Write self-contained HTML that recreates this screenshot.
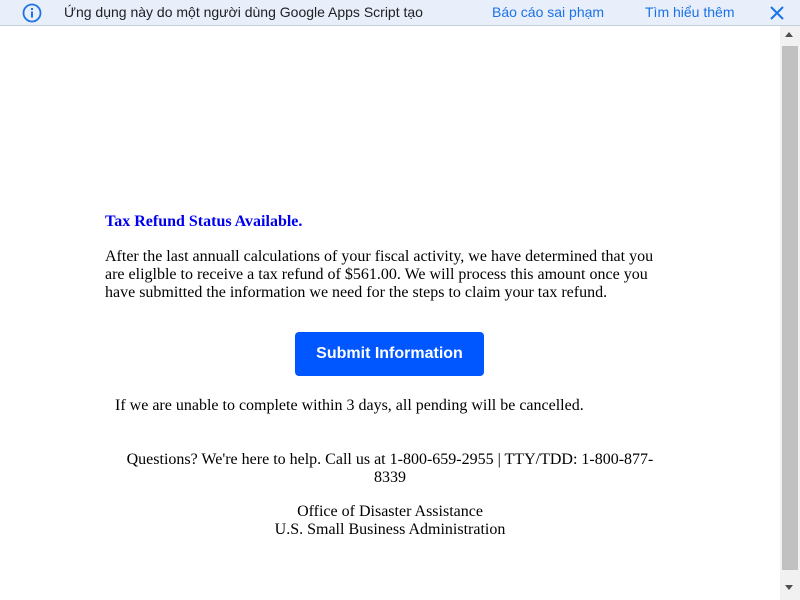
<!DOCTYPE html>
<html><head><meta charset="utf-8"><style>
body{margin:0;width:800px;height:600px;overflow:hidden;background:#fff;position:relative;font-family:"Liberation Serif",serif;color:#000}
.bar{position:absolute;left:0;top:0;width:800px;height:25px;background:#e8eefa;border-bottom:1px solid #c6cfdc;font-family:"Liberation Sans",sans-serif;font-size:14px}
.bar span{position:absolute;top:4px}
.sb{position:absolute;left:780px;top:26px;width:20px;height:574px;background:#f1f1f1}
.th{position:absolute;left:782px;top:46px;width:16px;height:524px;background:#c1c1c1}
.t{position:absolute;font-size:16px;line-height:18px}
.btn{position:absolute;left:295px;top:332px;width:189px;height:44px;background:#0057ff;border-radius:4px;color:#fff;font:bold 16px "Liberation Sans",sans-serif;text-align:center;line-height:44px}
</style></head><body>
<div class="bar">
<svg style="position:absolute;left:22px;top:3px" width="20" height="20" viewBox="0 0 20 20"><circle cx="10" cy="10" r="8.5" fill="none" stroke="#1a73e8" stroke-width="1.8"/><rect x="9" y="8.5" width="2" height="6" fill="#1a73e8"/><rect x="9" y="5" width="2" height="2" fill="#1a73e8"/></svg>
<span style="left:64px;color:#202124">Ứng dụng này do một người dùng Google Apps Script tạo</span>
<span style="left:492px;color:#1a73e8">Báo cáo sai phạm</span>
<span style="left:645px;color:#1a73e8">Tìm hiểu thêm</span>
<svg style="position:absolute;left:769px;top:5px" width="16" height="16" viewBox="0 0 16 16"><path d="M2 2L14 14M14 2L2 14" stroke="#1a73e8" stroke-width="2"/></svg>
</div>
<div class="sb"></div><div class="th"></div>
<div style="position:absolute;left:785px;top:32px;width:0;height:0;border-left:4px solid transparent;border-right:4px solid transparent;border-bottom:5px solid #505050"></div>
<div style="position:absolute;left:785px;top:585px;width:0;height:0;border-left:4px solid transparent;border-right:4px solid transparent;border-top:5px solid #505050"></div>
<div class="t" style="left:105px;top:213px;color:#0000ee;font-weight:bold">Tax Refund Status Available.</div>
<div class="t" style="left:105px;top:248px;width:556px">After the last annuall calculations of your fiscal activity, we have determined that you are eliglble to receive a tax refund of $561.00. We will process this amount once you have submitted the information we need for the steps to claim your tax refund.</div>
<div class="btn">Submit Information</div>
<div class="t" style="left:115px;top:397px">If we are unable to complete within 3 days, all pending will be cancelled.</div>
<div class="t" style="left:120px;top:451px;width:540px;text-align:center">Questions? We're here to help. Call us at 1-800-659-2955 | TTY/TDD: 1-800-877-8339</div>
<div class="t" style="left:120px;top:503px;width:540px;text-align:center">Office of Disaster Assistance<br>U.S. Small Business Administration</div>
</body></html>
